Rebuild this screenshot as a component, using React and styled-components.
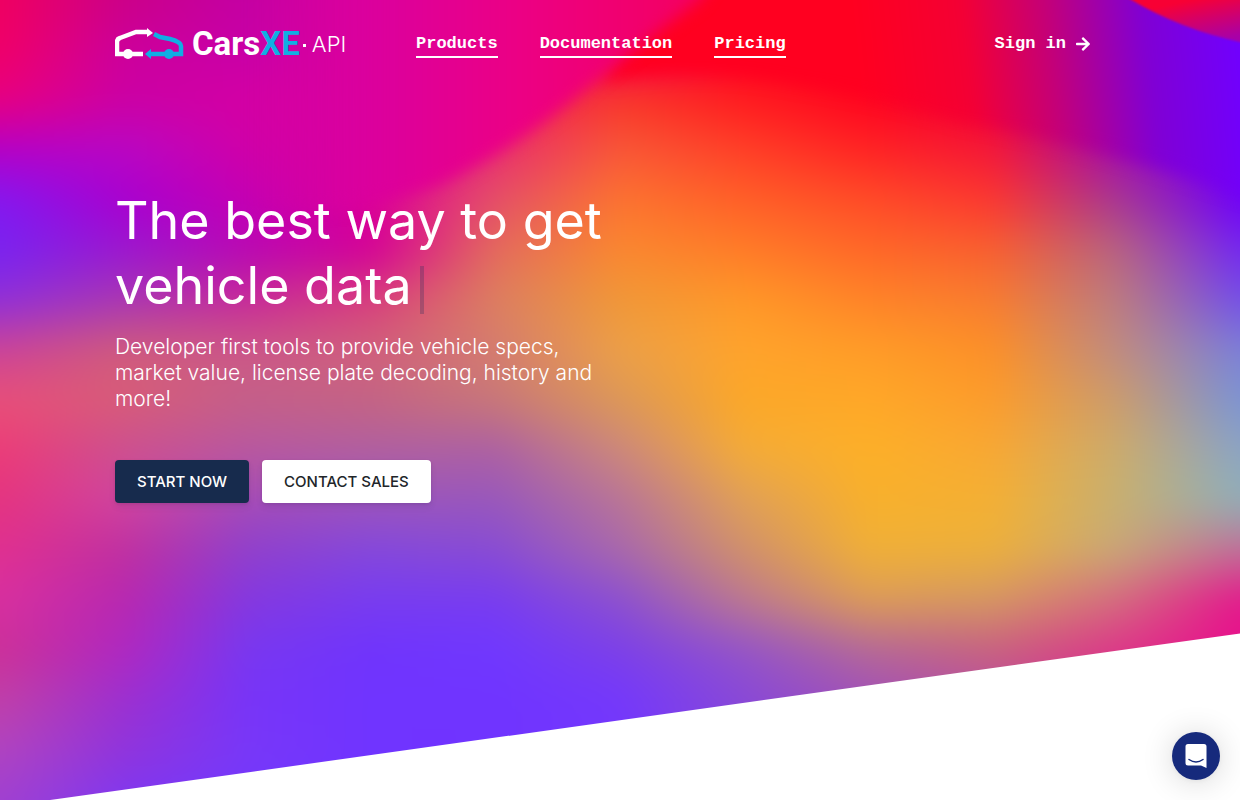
import styled, { createGlobalStyle, css } from 'styled-components';
import { FaArrowRight } from 'react-icons/fa';

const GlobalStyle = createGlobalStyle`
  :root {
    --font-text: Inter, 'Open Sans', sans-serif;
    --font-nav: 'Liberation Mono', monospace;
    --navy: #172b4d;
    --cyan: #11aee3;
  }

  *,
  *::before,
  *::after {
    box-sizing: border-box;
  }

  body {
    margin: 0;
    background: #fff;
    color: #fff;
    font-family: var(--font-text);
    scrollbar-width: none;
  }
`;

const Hero = styled.div`
  position: relative;
  min-height: 807px;
  clip-path: polygon(0 0, 100% 0, 100% calc(100% - 14vw), 0 100%);
`;

const Backdrop = styled.svg`
  position: absolute;
  inset: 0;
  width: 100%;
  height: 100%;
`;

const Container = styled.div`
  position: relative;
  max-width: 1010px;
  margin: 0 auto;
`;

const Header = styled.header`
  display: flex;
  align-items: center;
  height: 88px;
  padding-right: 34px;
`;

const Brand = styled.a`
  display: flex;
  align-items: center;
  width: 301px;
  color: #fff;
  text-decoration: none;
`;

const BrandName = styled.span`
  margin-left: 8px;
  font: 700 33px/32px Roboto, sans-serif;
`;

const BrandAccent = styled.span`
  color: var(--cyan);
`;

const BrandDot = styled.span`
  width: 3px;
  height: 3px;
  margin: 2px 6px 0 3px;
  background: #fff;
`;

const BrandSuffix = styled.span`
  font-size: 22px;
  font-weight: 300;
  line-height: 24px;
`;

const Nav = styled.nav`
  display: flex;
  gap: 42px;
`;

const NavLink = styled.a`
  display: inline-flex;
  align-items: center;
  gap: 9px;
  color: #fff;
  font: 700 17px/24px var(--font-nav);
  text-decoration: none;

  ${(props) =>
    props.$underlined &&
    css`
      margin-top: 2px;
      border-bottom: 2px solid #fff;
    `}
`;

const SignIn = styled(NavLink)`
  margin-left: auto;
`;

const Intro = styled.main`
  max-width: 510px;
  padding-top: 100px;
`;

const Title = styled.h1`
  margin: 0;
  font-size: 52px;
  font-weight: 400;
  line-height: 65px;
`;

const Cursor = styled.span`
  display: inline-block;
  width: 4px;
  height: 48px;
  margin-left: 8px;
  background: rgba(50, 50, 93, 0.3);
  vertical-align: -10px;
`;

const Lead = styled.p`
  margin: 16px 0 0;
  font-size: 21px;
  font-weight: 300;
  line-height: 26px;
`;

const Actions = styled.div`
  display: flex;
  gap: 13px;
  margin-top: 48px;
`;

const Button = styled.button`
  height: 43px;
  padding: 0 22px;
  border: none;
  border-radius: 4px;
  background: ${(props) => (props.$primary ? 'var(--navy)' : '#fff')};
  box-shadow: 0 4px 6px rgba(50, 50, 93, 0.11), 0 1px 3px rgba(0, 0, 0, 0.08);
  color: ${(props) => (props.$primary ? '#fff' : '#212529')};
  font-family: var(--font-text);
  font-size: 15px;
  font-weight: 500;
  text-transform: uppercase;
  cursor: pointer;
`;

const ChatButton = styled.button`
  position: fixed;
  right: 20px;
  bottom: 20px;
  display: grid;
  place-items: center;
  width: 48px;
  height: 48px;
  padding: 0;
  border: none;
  border-radius: 50%;
  background: #162a7c;
  box-shadow: 0 1px 6px rgba(0, 0, 0, 0.06), 0 2px 32px rgba(0, 0, 0, 0.16);
  cursor: pointer;
`;

// colours of the gradient mesh, one row every 50 units, one stop every 124
const MESH = [
  ['#f00060', '#cc0088', '#c400a4', '#dc0098', '#ec0090', '#f40070', '#ff0028', '#ff0024', '#cc0068', '#9400c4', '#7c00f0'],
  ['#f00068', '#cc009c', '#c800a8', '#dc0098', '#ec008c', '#f4005c', '#ff0024', '#ff0020', '#d80060', '#8c00cc', '#7000ff'],
  ['#e80080', '#cc00a4', '#d400a4', '#dc009c', '#ec2068', '#f83828', '#ff1c20', '#ff0420', '#f40038', '#9c00b0', '#7000f8'],
  ['#b400c8', '#b808c4', '#d000a8', '#dc009c', '#e83070', '#f85838', '#ff4028', '#ff2424', '#f41838', '#a410a8', '#7000ff'],
  ['#8418f0', '#a800d0', '#c400b4', '#dc0098', '#e45068', '#fc7430', '#ff6028', '#ff4c28', '#fc3830', '#a83890', '#7000f8'],
  ['#7824f0', '#9a18d0', '#b808b4', '#d40098', '#e46c5c', '#fa8830', '#ff7c28', '#ff6828', '#f86030', '#b86480', '#7428f0'],
  ['#9030d8', '#a838b4', '#c82c98', '#d8407c', '#dc8060', '#f09838', '#ff9828', '#ff8428', '#f87c30', '#bc7c80', '#7450e8'],
  ['#cc4498', '#d05c7c', '#cc5888', '#d0607c', '#d47c70', '#eca048', '#ffa42c', '#ff9c28', '#fc9028', '#c08c80', '#7c80d8'],
  ['#e85078', '#d85c78', '#c46088', '#c46484', '#c87878', '#dc9858', '#fca828', '#ffa828', '#fc9c2c', '#cc9c6c', '#7c94d4'],
  ['#ec3c78', '#cc5090', '#b858a0', '#b060a0', '#ac60a4', '#cc887c', '#f4ac38', '#fdb028', '#f8a834', '#ccac6c', '#8ca4c4'],
  ['#e43480', '#d044a0', '#a44cb8', '#9c54bc', '#9858bc', '#b87498', '#e0a058', '#f8b02c', '#f4b034', '#c8b070', '#90b0b8'],
  ['#e03090', '#c030a0', '#9040cc', '#8448dc', '#884cd4', '#a868ac', '#d0906c', '#f0b038', '#ecb03c', '#c8a878', '#c07098'],
  ['#d830a0', '#b828b0', '#8438e0', '#783cf0', '#783cf0', '#8c50d0', '#bc7890', '#dc9c58', '#d49864', '#d46c80', '#e4188c'],
  ['#cc3098', '#b028c0', '#7838f0', '#7034fc', '#7038ff', '#7c40e8', '#9454c8', '#b46898', '#c86080', '#dc3888', '#e8108c'],
  ['#c040a8', '#9c30d0', '#7834f8', '#7034ff', '#7034ff', '#7438fc', '#8848d8', '#a050b8', '#b850a0', '#dc2c8c', '#e8108c'],
  ['#b044c0', '#9034dc', '#7838f8', '#7034ff', '#7034ff', '#7438fc', '#8848d8', '#a050b8', '#b050a8', '#d83090', '#e8108c'],
  ['#a040d0', '#8038f0', '#7438fc', '#7034ff', '#7034ff', '#7438fc', '#8848d8', '#a050b8', '#b050a8', '#d83090', '#e8108c'],
];
const STEP = 50;

const MeshBackdrop = () => (
  <Backdrop viewBox="0 0 1240 807" preserveAspectRatio="none" aria-hidden="true">
    <defs>
      <linearGradient id="fade" x2="0" y2="1">
        <stop stopColor="#000" />
        <stop offset="1" stopColor="#fff" />
      </linearGradient>
      {MESH.map((row, i) => (
        <linearGradient key={i} id={`row${i}`} gradientUnits="userSpaceOnUse" x1="0" x2="1240">
          {row.map((color, j) => (
            <stop key={j} offset={j / (row.length - 1)} stopColor={color} />
          ))}
        </linearGradient>
      ))}
      {MESH.map((row, i) => (
        <mask key={i} id={`mask${i}`} maskUnits="userSpaceOnUse" x="-100" y="-100" width="1440" height="1100">
          <rect x="-100" y={(i - 1) * STEP} width="1440" height={STEP} fill="url(#fade)" />
          <rect x="-100" y={i * STEP} width="1440" height="1100" fill="#fff" />
        </mask>
      ))}
      <linearGradient id="magenta" gradientUnits="userSpaceOnUse" x1="250" x2="700">
        <stop stopColor="#d000a8" stopOpacity="0" />
        <stop offset="0.3" stopColor="#dc009c" />
        <stop offset="0.6" stopColor="#ec0084" />
        <stop offset="1" stopColor="#f40060" />
      </linearGradient>
      <linearGradient id="violet" gradientUnits="userSpaceOnUse" x1="860" y1="60" x2="1240" y2="20">
        <stop stopColor="#ff0020" />
        <stop offset="0.28" stopColor="#f40034" />
        <stop offset="0.5" stopColor="#c40078" />
        <stop offset="0.75" stopColor="#8000d4" />
        <stop offset="1" stopColor="#7000ff" />
      </linearGradient>
      <linearGradient id="corner" gradientUnits="userSpaceOnUse" x1="1190" y1="0" x2="1200" y2="45">
        <stop stopColor="#f80034" />
        <stop offset="1" stopColor="#a800a8" />
      </linearGradient>
      <filter id="blend" filterUnits="userSpaceOnUse" x="-100" y="-100" width="1440" height="1100" colorInterpolationFilters="sRGB">
        <feGaussianBlur stdDeviation="16" />
      </filter>
      <filter id="soft" filterUnits="userSpaceOnUse" x="-100" y="-100" width="1440" height="1100" colorInterpolationFilters="sRGB">
        <feGaussianBlur stdDeviation="8" />
      </filter>
      <filter id="edge" filterUnits="userSpaceOnUse" x="-100" y="-100" width="1440" height="1100" colorInterpolationFilters="sRGB">
        <feGaussianBlur stdDeviation="1" />
      </filter>
    </defs>
    <g filter="url(#blend)">
      {MESH.map((row, i) => (
        <rect
          key={i}
          x="-100"
          y={i === 0 ? -100 : (i - 1) * STEP}
          width="1440"
          height="1100"
          fill={`url(#row${i})`}
          mask={i === 0 ? undefined : `url(#mask${i})`}
        />
      ))}
    </g>
    <path d="M690 -60 L600 82 Q700 64 800 84 Q900 100 960 120 Q1120 150 1300 214 V-60Z" fill="url(#violet)" filter="url(#soft)" />
    <path d="M240 -60 H740 L700 0 Q640 45 590 85 Q530 140 440 185 Q340 220 240 210Z" fill="url(#magenta)" filter="url(#soft)" />
    <path d="M1128 -2 Q1185 32 1250 44 V-20 H1100Z" fill="url(#corner)" filter="url(#edge)" />
  </Backdrop>
);

const CarsLogo = () => (
  <svg width="69" height="32" viewBox="0 0 69 32" fill="none" strokeWidth="4.5" aria-hidden="true">
    <path d="M28 26H2V14Q2 11 5 10L21 4H33" stroke="#fff" />
    <path d="M32 0L38 5L32 9Z" fill="#fff" />
    <circle cx="13" cy="26" r="5" fill="#fff" />
    <path d="M39 6L45 9L55 11Q66 14 66 18V26H34" stroke="#11aee3" />
    <path d="M36 21L30 26L36 31Z" fill="#11aee3" />
    <circle cx="54" cy="26" r="5" fill="#11aee3" />
  </svg>
);

const ChatIcon = () => (
  <svg width="24" height="26" viewBox="0 0 24 26" aria-hidden="true">
    <path d="M4 1H20Q22.500 1 22.500 3.500V25L17 22.500H4Q1.500 22.500 1.500 20V3.500Q1.500 1 4 1Z" fill="#fff" />
    <path d="M5 16.500Q12 21.500 19 16.500" fill="none" stroke="#162a7c" strokeWidth="1.500" strokeLinecap="round" />
  </svg>
);

const links = ['Products', 'Documentation', 'Pricing'];

export default function App() {
  return (
    <>
      <GlobalStyle />
      <Hero>
        <MeshBackdrop />
        <Container>
          <Header>
            <Brand href="#">
              <CarsLogo />
              <BrandName>
                Cars<BrandAccent>XE</BrandAccent>
              </BrandName>
              <BrandDot />
              <BrandSuffix>API</BrandSuffix>
            </Brand>
            <Nav>
              {links.map((link) => (
                <NavLink key={link} href="#" $underlined>
                  {link}
                </NavLink>
              ))}
            </Nav>
            <SignIn href="#">
              Sign in <FaArrowRight size={16} />
            </SignIn>
          </Header>
          <Intro>
            <Title>
              The best way to get vehicle data
              <Cursor />
            </Title>
            <Lead>
              Developer first tools to provide vehicle specs, market value, license plate decoding, history and more!
            </Lead>
            <Actions>
              <Button $primary>Start now</Button>
              <Button>Contact sales</Button>
            </Actions>
          </Intro>
        </Container>
      </Hero>
      <ChatButton aria-label="Open chat">
        <ChatIcon />
      </ChatButton>
    </>
  );
}
